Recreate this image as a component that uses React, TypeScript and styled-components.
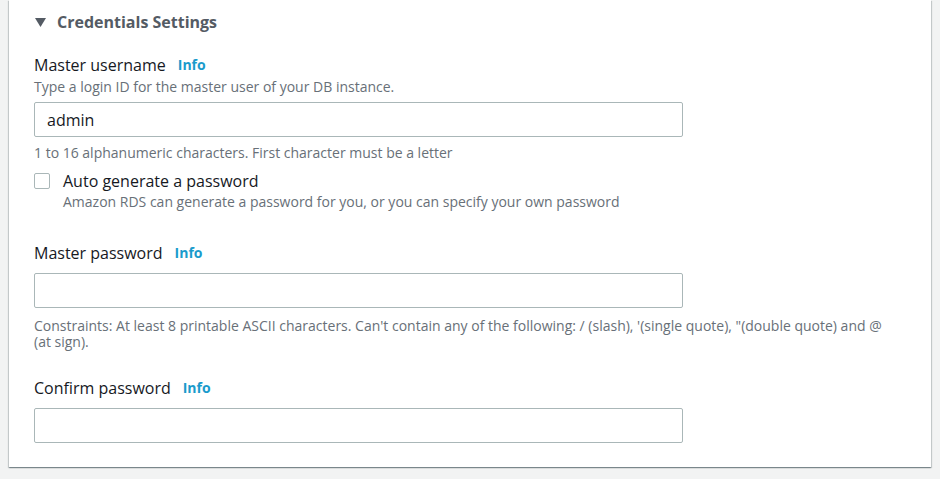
import { ReactNode } from 'react';
import styled, { createGlobalStyle } from 'styled-components';

const textColor = '#16191f';
const mutedColor = '#687078';
const headingColor = '#545b64';
const linkColor = '#1a9bcc';
const borderColor = '#aab7b8';

const GlobalStyle = createGlobalStyle`
  html, body {
    margin: 0;
    padding: 0;
    background: #f2f3f3;
    font-family: "Open Sans", "Liberation Sans", Arial, sans-serif;
    color: ${textColor};
  }
`;

const Page = styled.div`
  width: 940px;
  height: 479px;
  padding: 0 9px 0 9px;
  box-sizing: border-box;
  overflow: hidden;
`;

const Panel = styled.section`
  background: #fff;
  box-shadow: 0 1px 1px 0 rgba(0, 28, 36, 0.3), 1px 1px 1px 0 rgba(0, 28, 36, 0.15),
    -1px 1px 1px 0 rgba(0, 28, 36, 0.15);
  padding: 12px 24px 24px 25px;
`;

const Heading = styled.h2`
  display: flex;
  align-items: center;
  gap: 11px;
  margin: 0;
  height: 20px;
  font-size: 16px;
  font-weight: 700;
  color: ${headingColor};
  padding-left: 1px;
`;

const Field = styled.div<{ $top: number }>`
  margin-top: ${(p) => p.$top}px;
`;

const Label = styled.label`
  display: flex;
  align-items: center;
  gap: 12px;
  font-size: 16px;
  line-height: 20px;
  color: ${textColor};
`;

const Info = styled.a`
  font-size: 14px;
  font-weight: 700;
  color: ${linkColor};
  text-decoration: none;
`;

const Hint = styled.div<{ $top: number }>`
  margin-top: ${(p) => p.$top}px;
  font-size: 14px;
  line-height: 16px;
  color: ${mutedColor};
  max-width: 860px;
`;

const Input = styled.input<{ $top: number }>`
  display: block;
  box-sizing: border-box;
  margin-top: ${(p) => p.$top}px;
  width: 649px;
  height: 35px;
  padding: 0 12px;
  border: 1px solid ${borderColor};
  border-radius: 2px;
  background: #fff;
  font-family: inherit;
  font-size: 16px;
  color: ${textColor};
  outline: none;
`;

const CheckRow = styled.div`
  display: flex;
  align-items: flex-start;
  gap: 13px;
  margin-top: 10px;
`;

const Box = styled.span`
  flex: none;
  width: 16px;
  height: 16px;
  margin-top: 2px;
  box-sizing: border-box;
  border: 1px solid ${borderColor};
  border-radius: 2px;
  background: #fff;
`;

const CheckText = styled.div`
  font-size: 16px;
  line-height: 20px;
`;

const Triangle = () => (
  <svg width="11" height="9" viewBox="0 0 11 9">
    <path d="M0 0 H11 L5.5 9 Z" fill={headingColor} />
  </svg>
);

const FieldLabel = ({ children }: { children: ReactNode }) => (
  <Label>
    {children}
    <Info href="#">Info</Info>
  </Label>
);

export default function App() {
  return (
    <>
      <GlobalStyle />
      <Page>
        <Panel>
          <Heading>
            <Triangle />
            Credentials Settings
          </Heading>

          <Field $top={23}>
            <FieldLabel>Master username</FieldLabel>
            <Hint $top={4}>Type a login ID for the master user of your DB instance.</Hint>
            <Input $top={7} defaultValue="admin" />
            <Hint $top={8}>1 to 16 alphanumeric characters. First character must be a letter</Hint>
            <CheckRow>
              <Box />
              <div>
                <CheckText>Auto generate a password</CheckText>
                <Hint $top={3}>
                  Amazon RDS can generate a password for you, or you can specify your own password
                </Hint>
              </div>
            </CheckRow>
          </Field>

          <Field $top={33}>
            <FieldLabel>Master password</FieldLabel>
            <Input $top={10} type="password" />
            <Hint $top={10}>
              Constraints: At least 8 printable ASCII characters. Can't contain any of the following: /
              (slash), '(single quote), "(double quote) and @ (at sign).
            </Hint>
          </Field>

          <Field $top={28}>
            <FieldLabel>Confirm password</FieldLabel>
            <Input $top={10} type="password" />
          </Field>
        </Panel>
      </Page>
    </>
  );
}
